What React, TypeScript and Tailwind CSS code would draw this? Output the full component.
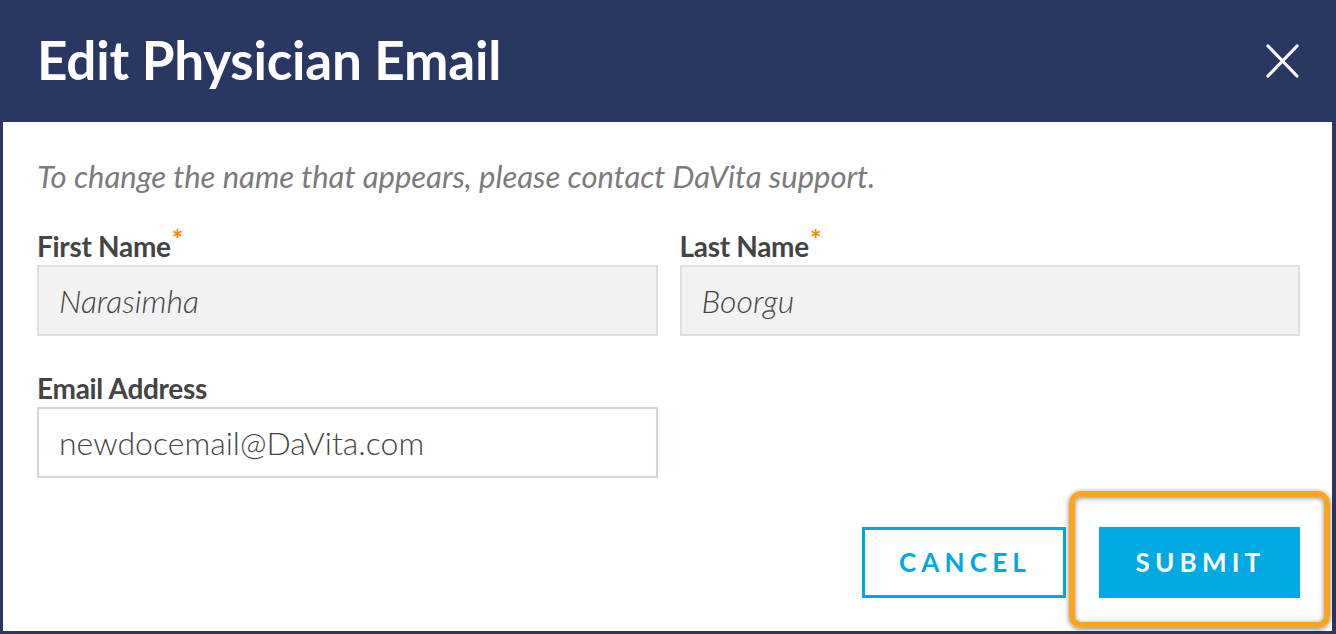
import React from "react";

export default function App() {
  return (
    <div
      className="w-[1336px] h-[634px] bg-[#293763] flex flex-col overflow-hidden"
      style={{ fontFamily: "Lato, 'Open Sans', sans-serif" }}
    >
      <div className="h-[122px] shrink-0 flex items-center justify-between pl-[37px] pr-[37px]">
        <h1 className="text-white font-bold text-[53px] leading-none tracking-[-0.2px] pb-[4px]">
          Edit Physician Email
        </h1>
        <button className="w-[34px] h-[36px] flex items-center justify-center" aria-label="Close">
          <svg width="33" height="34" viewBox="0 0 33 34" fill="none">
            <path d="M2 2 L31 32 M31 2 L2 32" stroke="white" strokeWidth="3.2" strokeLinecap="round" />
          </svg>
        </button>
      </div>
      <div className="relative flex-1 ml-[3px] mr-[4px] mb-[3px] bg-white pl-[34px] pr-[32px] pt-[36px]">
        <p className="italic text-[#7b7b7b] text-[31px] leading-[36px]">
          To change the name that appears, please contact DaVita support.
        </p>
        <div className="grid grid-cols-2 gap-x-[22px] mt-[36px]">
          <div>
            <div className="font-bold text-[#444444] text-[28px] leading-[32px] tracking-[-0.3px]">
              First Name<span className="text-[#f08a00] relative top-[-8px] text-[27px] leading-none ml-[1px]">*</span>
            </div>
            <div className="mt-[3px] h-[71px] bg-[#f2f2f2] border-2 border-[#dedede] flex items-center pl-[20px] italic font-light text-[#444444] text-[32px]">
              Narasimha
            </div>
          </div>
          <div>
            <div className="font-bold text-[#444444] text-[28px] leading-[32px] tracking-[-0.3px]">
              Last Name<span className="text-[#f08a00] relative top-[-8px] text-[27px] leading-none ml-[1px]">*</span>
            </div>
            <div className="mt-[3px] h-[71px] bg-[#f2f2f2] border-2 border-[#dedede] flex items-center pl-[20px] italic font-light text-[#444444] text-[32px]">
              Boorgu
            </div>
          </div>
          <div className="mt-[36px]">
            <div className="font-bold text-[#444444] text-[28px] leading-[32px] tracking-[-0.3px]">Email Address</div>
            <div className="mt-[3px] h-[71px] bg-white border-2 border-[#cfd5df] flex items-center pl-[20px] font-light text-[#444444] text-[32px]">
              newdocemail@DaVita.com
            </div>
          </div>
        </div>
        <div className="flex justify-end gap-[33px] mt-[49px]">
          <button className="w-[204px] h-[71px] border-[3px] border-[#00a8e3] text-[#00a8e3] font-bold text-[26px] tracking-[0.2em] flex items-center justify-center pl-[2px]">
            CANCEL
          </button>
          <button className="w-[201px] h-[71px] bg-[#00a9e3] text-white font-bold text-[26px] tracking-[0.2em] flex items-center justify-center pl-[2px]">
            SUBMIT
          </button>
        </div>
        <div className="absolute left-[1066px] top-[369px] w-[261px] h-[137px] border-[6px] border-[#f9a61e] rounded-[12px] shadow-[0_1px_5px_rgba(0,0,0,0.5),inset_0_1px_5px_rgba(0,0,0,0.45)] pointer-events-none" />
      </div>
    </div>
  );
}
